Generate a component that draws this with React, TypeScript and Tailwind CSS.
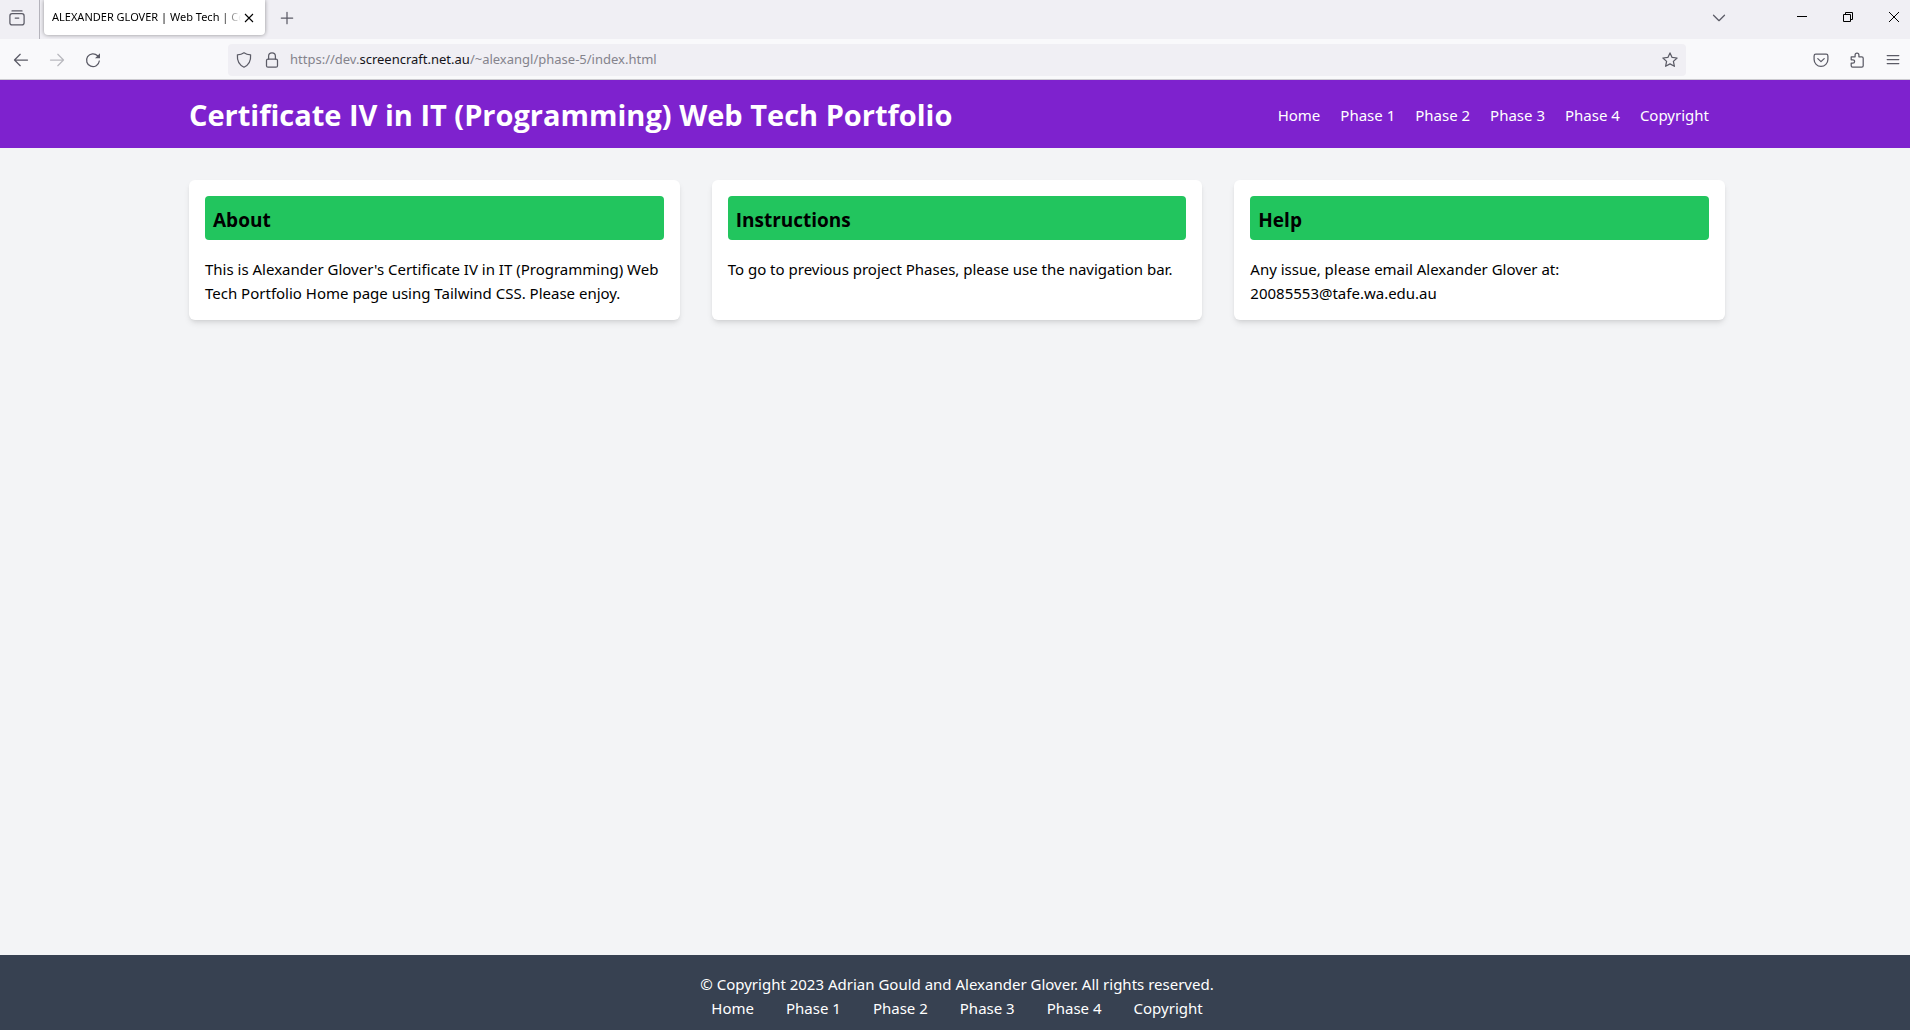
import type { ReactNode } from "react";

const links = ["Home", "Phase 1", "Phase 2", "Phase 3", "Phase 4", "Copyright"];

const cards = [
  {
    title: "About",
    text: "This is Alexander Glover's Certificate IV in IT (Programming) Web Tech Portfolio Home page using Tailwind CSS. Please enjoy.",
  },
  {
    title: "Instructions",
    text: "To go to previous project Phases, please use the navigation bar.",
  },
  {
    title: "Help",
    text: "Any issue, please email Alexander Glover at: 20085553@tafe.wa.edu.au",
  },
];

function Icon({ children }: { children: ReactNode }) {
  return (
    <svg
      className="size-4"
      viewBox="0 0 16 16"
      fill="none"
      stroke="currentColor"
      strokeWidth="1.25"
      strokeLinecap="round"
      strokeLinejoin="round"
      aria-hidden="true"
    >
      {children}
    </svg>
  );
}

function IconButton({ label, className = "", children }: { label: string; className?: string; children: ReactNode }) {
  return (
    <button type="button" aria-label={label} className={"flex h-9 shrink-0 items-center justify-center " + className}>
      <Icon>{children}</Icon>
    </button>
  );
}

function TabStrip() {
  return (
    <div className="flex h-[39px] items-start bg-[#f0eff4] text-[#5b5b66]">
      <div className="flex h-full w-10 shrink-0 items-start border-r border-[#b5b4bc]">
        <IconButton label="Firefox View" className="w-[34px]">
          <path d="M3 0.9h10" />
          <rect x="0.9" y="3.7" width="14.2" height="11.2" rx="2.2" />
          <path d="M6.2 8h3.6" />
        </IconButton>
      </div>
      <div className="ml-1 flex h-[35px] w-[221px] shrink-0 items-center rounded-b bg-white pl-2 text-black shadow-[0_0_4px_rgba(0,0,0,0.4)]">
        <span className="w-[189px] shrink-0 overflow-hidden text-[11px] whitespace-nowrap [mask-image:linear-gradient(to_right,black_90%,transparent)]">
          ALEXANDER GLOVER | Web Tech | Certificate IV
        </span>
        <button type="button" aria-label="Close tab" className="flex size-4 items-center justify-center">
          <svg className="size-3" viewBox="0 0 12 12" fill="none" stroke="currentColor" strokeWidth="1.1" aria-hidden="true">
            <path d="M2 2l8 8M10 2l-8 8" />
          </svg>
        </button>
      </div>
      <IconButton label="New tab" className="ml-1 w-9">
        <path d="M8 2.3v11.4M2.3 8h11.4" />
      </IconButton>
      <div className="ml-auto flex">
        <IconButton label="List all tabs" className="mr-[42px] w-9">
          <path d="M2.5 5.2L8 10.7l5.5-5.5" />
        </IconButton>
        <div className="flex text-black">
          <button type="button" aria-label="Minimize" className="flex h-[34px] w-[46px] items-center justify-center">
            <svg className="size-[10px]" viewBox="0 0 10 10" stroke="currentColor" aria-hidden="true">
              <path d="M0 4.5h10" />
            </svg>
          </button>
          <button type="button" aria-label="Restore" className="flex h-[34px] w-[46px] items-center justify-center">
            <svg className="size-[10px]" viewBox="0 0 10 10" fill="none" stroke="currentColor" aria-hidden="true">
              <path d="M0.5 2.5h7v7h-7zM2.5 2.5v-2h7v7h-2" />
            </svg>
          </button>
          <button type="button" aria-label="Close window" className="flex h-[34px] w-[39px] items-center pl-[18px]">
            <svg className="size-[10px]" viewBox="0 0 10 10" stroke="currentColor" aria-hidden="true">
              <path d="M0 0l10 10M10 0L0 10" />
            </svg>
          </button>
        </div>
      </div>
    </div>
  );
}

function Toolbar() {
  return (
    <div className="flex h-[41px] items-center border-b border-[#cccbd0] bg-[#f9f9fb] pt-px pl-[3px] text-[#5b5b66]">
      <IconButton label="Back" className="w-9">
        <path d="M14.5 8H1.8M7.2 2.3L1.5 8l5.7 5.7" />
      </IconButton>
      <IconButton label="Forward" className="w-9 opacity-40">
        <path d="M1.5 8h12.7M8.8 2.3L14.5 8l-5.7 5.7" />
      </IconButton>
      <IconButton label="Reload" className="w-9">
        <path d="M14.3 9A6.4 6.4 0 1 1 12.6 3.8L13.6 4.8" />
        <path d="M15 1.3v5h-5z" fill="currentColor" stroke="none" />
      </IconButton>
      <div className="ml-[117px] flex h-8 min-w-0 flex-1 items-center rounded bg-[#f0eff4]">
        <button type="button" aria-label="Tracking protection" className="flex size-8 items-center justify-center">
          <Icon>
            <path d="M8 0.8C9.7 2.1 11.9 2.8 14.6 2.9C15 8.4 13 12.9 8 15.2C3 12.9 1 8.4 1.4 2.9C4.1 2.8 6.3 2.1 8 0.8z" />
          </Icon>
        </button>
        <button type="button" aria-label="Site information" className="flex h-8 w-6 items-center justify-center">
          <Icon>
            <rect x="2.5" y="7" width="11" height="8.2" rx="1.5" />
            <path d="M4.6 7V4.2a3.4 3.4 0 0 1 6.8 0V7" />
          </Icon>
        </button>
        <span className="ml-1.5 pt-px text-[13px] whitespace-nowrap text-[#84838c]">
          https://dev.<span className="text-[#15141a]">screencraft.net.au</span>/~alexangl/phase-5/index.html
        </span>
        <button type="button" aria-label="Bookmark this page" className="ml-auto flex size-8 items-center justify-center">
          <Icon>
            <path d="M8 0.9l2.1 4.5 5 .6-3.7 3.4 1 4.9L8 11.9l-4.4 2.4 1-4.9L.9 6l5-.6z" />
          </Icon>
        </button>
      </div>
      <div className="ml-[117px] flex">
        <IconButton label="Save to Pocket" className="w-9">
          <path d="M2.8 2.2h10.4c1 0 1.7.7 1.7 1.7v3.6a6.9 6.9 0 0 1-13.8 0V3.9c0-1 .7-1.7 1.7-1.7z" />
          <path d="M4.8 6.6L8 9.6l3.2-3" />
        </IconButton>
        <IconButton label="Extensions" className="w-9">
          <path d="M2.2 4.8h3.9V3a1.9 1.9 0 0 1 3.8 0v1.8h2.9c.8 0 1.4.6 1.4 1.4v7.6c0 .8-.6 1.4-1.4 1.4H3.6c-.8 0-1.4-.6-1.4-1.4v-2.6h1.7a1.6 1.6 0 0 0 0-3.4H2.2z" />
        </IconButton>
        <IconButton label="Open application menu" className="w-[35px]">
          <path d="M2.2 3.5h11.6M2.2 7.5h11.6M2.2 11.5h11.6" />
        </IconButton>
      </div>
    </div>
  );
}

function NavLinks({ className }: { className: string }) {
  return (
    <ul className={"flex " + className}>
      {links.map((link) => (
        <li key={link}>
          <a href="#">{link}</a>
        </li>
      ))}
    </ul>
  );
}

export default function App() {
  return (
    <div className="flex min-h-screen flex-col bg-gray-100 font-['Segoe_UI','Noto_Sans',sans-serif] text-black">
      <TabStrip />
      <Toolbar />
      <header className="bg-[#7e22ce] pt-[17px] pb-[15px] pl-1 text-white">
        <div className="mx-auto flex max-w-[1536px] items-center justify-between pr-4">
          <h1 className="font-['Segoe_UI','Open_Sans',sans-serif] text-[29px] leading-9 font-bold">
            Certificate IV in IT (Programming) Web Tech Portfolio
          </h1>
          <nav aria-label="Main" className="text-[15px] leading-6">
            <NavLinks className="gap-5" />
          </nav>
        </div>
      </header>
      <main className="flex-1 py-8 pl-1">
        <div className="mx-auto grid max-w-[1536px] grid-cols-3 gap-8">
          {cards.map((card) => (
            <section key={card.title} className="rounded-md bg-white px-4 pt-4 pb-[15px] shadow-md">
              <h2 className="mb-[17px] rounded bg-[#22c55e] px-2 pt-[10px] pb-[6px] font-['Segoe_UI','Open_Sans',sans-serif] text-[19px] leading-7 font-bold">
                {card.title}
              </h2>
              <p className="text-[15px] leading-6">{card.text}</p>
            </section>
          ))}
        </div>
      </main>
      <footer className="bg-[#374151] pt-[17px] pb-[10px] pl-1 text-center text-[15px] leading-6 text-white">
        <p>© Copyright 2023 Adrian Gould and Alexander Glover. All rights reserved.</p>
        <nav aria-label="Footer">
          <NavLinks className="justify-center gap-8" />
        </nav>
      </footer>
    </div>
  );
}
